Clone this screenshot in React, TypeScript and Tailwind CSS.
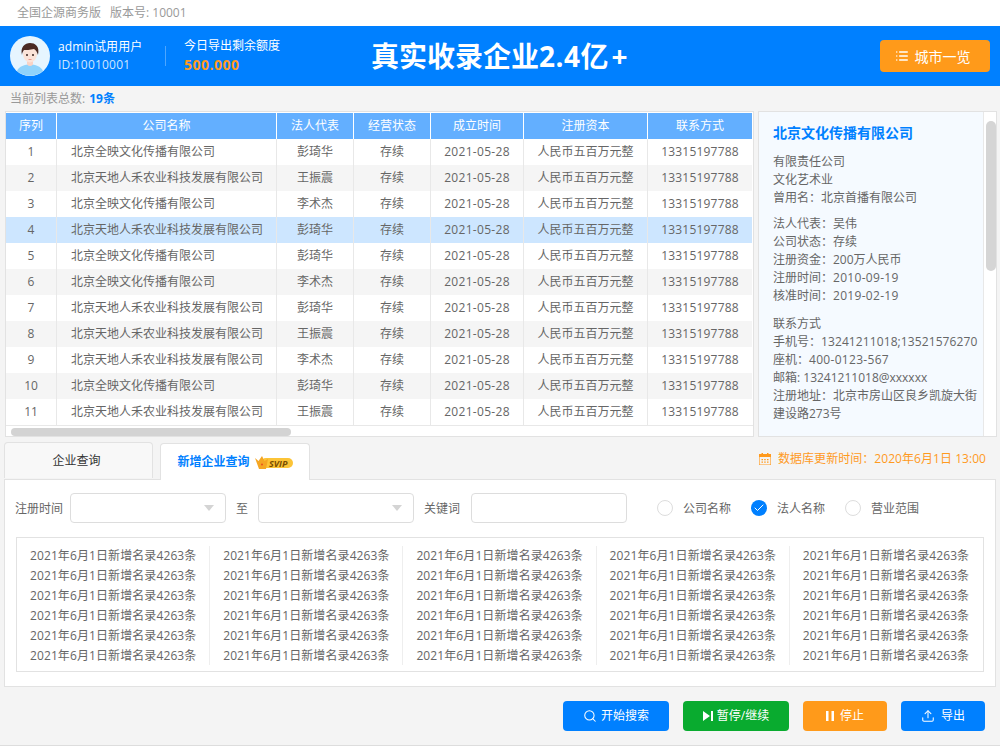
import { Check, List, Search, Upload } from 'lucide-react';

const companyA = '北京全映文化传播有限公司';
const companyB = '北京天地人禾农业科技发展有限公司';

const rows = [
  { id: 1, name: companyA, person: '彭琦华' },
  { id: 2, name: companyB, person: '王振震' },
  { id: 3, name: companyA, person: '李术杰' },
  { id: 4, name: companyB, person: '彭琦华' },
  { id: 5, name: companyA, person: '彭琦华' },
  { id: 6, name: companyA, person: '李术杰' },
  { id: 7, name: companyB, person: '彭琦华' },
  { id: 8, name: companyB, person: '王振震' },
  { id: 9, name: companyB, person: '李术杰' },
  { id: 10, name: companyA, person: '彭琦华' },
  { id: 11, name: companyB, person: '王振震' },
];

const gridCols = 'grid grid-cols-[51px_220px_77px_77px_93px_124px_105px]';

function Avatar() {
  return (
    <svg viewBox="0 0 40 40" className="w-10 h-10 shrink-0">
      <circle cx="20" cy="20" r="20" fill="#e6f5ff" />
      <path d="M7 35c2-5 8-6 13-7 5 1 11 2 13 7a20 20 0 0 1-26 0z" fill="#8fd3fb" />
      <path d="M17 24h6v4.500c-2 2-4 2-6 0z" fill="#f8d3c5" />
      <ellipse cx="20" cy="18" rx="7" ry="8.500" fill="#fbe3d8" />
      <path d="M12 19c-2-8 3-12 8-12s10 3 8 12c-1-3-2-5-4-6-4 1-8 1-10 1-1 1-2 3-2 5z" fill="#4a2a24" />
      <circle cx="17" cy="19" r="1" fill="#3a2420" />
      <circle cx="23" cy="19" r="1" fill="#3a2420" />
      <path d="M18.500 23.500h3" stroke="#e58a80" strokeWidth="0.800" />
    </svg>
  );
}

function SvipBadge() {
  return (
    <div className="relative w-[38px] h-[14px] ml-[5px]">
      <div className="absolute left-[6px] top-[3px] right-0 h-[10px] rounded-full bg-[#fcc437] flex items-center justify-end pr-[5px]">
        <span className="text-[9px] leading-none italic font-bold text-[#7a4d00]">SVIP</span>
      </div>
      <svg viewBox="0 0 14 13" className="absolute left-0 top-px w-[14px] h-[13px]">
        <path d="M0 2l3.500 3L7 0l2.500 5L13 3l-2 10H4z" fill="#f5a623" />
        <circle cx="7" cy="8.500" r="1" fill="#e8501f" />
      </svg>
    </div>
  );
}

function Select({ width }: { width: string }) {
  return (
    <div className={`${width} h-[30px] bg-white border border-[#dddddd] rounded flex items-center justify-end pr-[11px]`}>
      <svg viewBox="0 0 10 6" className="w-[10px] h-[6px]">
        <path d="M0 0h10L5 6z" fill="#d4d4d4" />
      </svg>
    </div>
  );
}

function Radio({ label, checked, width }: { label: string; checked?: boolean; width: string }) {
  return (
    <div className={`flex items-center ${width}`}>
      {checked ? (
        <div className="w-4 h-4 rounded-full bg-[#0080ff] flex items-center justify-center">
          <Check className="w-3 h-3 text-white" strokeWidth={2} />
        </div>
      ) : (
        <div className="w-4 h-4 rounded-full bg-white border border-[#dddddd]" />
      )}
      <span className="ml-[10px] pt-px">{label}</span>
    </div>
  );
}

export default function App() {
  return (
    <div className="w-[1000px] h-[746px] overflow-hidden bg-[#f4f4f4] text-[12px] text-[#666666] font-['Open_Sans','Noto_Sans_CJK_SC',sans-serif] border-b border-[#dddddd]">
      <div className="h-[26px] bg-white pl-[17px] flex items-center text-[#999999] gap-[9px]">
        <span>全国企源商务版</span>
        <span>版本号: 10001</span>
      </div>

      {/* Header */}
      <div className="h-[60px] bg-[#0080ff] flex items-center pl-[10px] pr-[10px] text-white">
        <Avatar />
        <div className="ml-[8px] w-[107px]">
          <div className="leading-[18px] tracking-[0.1px]">admin试用用户</div>
          <div className="leading-[18px] text-[#cfe6ff] tracking-[0.2px]">ID:10010001</div>
        </div>
        <div className="w-px h-[20px] bg-[#4da6ff]" />
        <div className="ml-[18px] w-[187px]">
          <div className="leading-[18px]">今日导出剩余额度</div>
          <div className="leading-[20px] text-[14px] font-bold text-[#ff9a1e] tracking-[0.5px]">500.000</div>
        </div>
        <div className="text-[28px] font-bold leading-none whitespace-nowrap">
          真实收录企业<span className="tracking-[0.5px]">2.4</span>亿<span className="ml-[3px]">+</span>
        </div>
        <button className="ml-auto w-[110px] h-[32px] bg-[#ff9a1a] rounded flex items-center justify-center gap-[6px] pr-[5px] text-[14px]">
          <List className="w-[14px] h-[14px]" strokeWidth={2.5} />
          城市一览
        </button>
      </div>

      <div className="h-[25px] pl-[10px] flex items-center text-[#999999]">
        当前列表总数:<span className="ml-1 font-bold text-[#0080ff]">19条</span>
      </div>

      {/* Table + detail */}
      <div className="flex pl-[5px] pr-[3px] h-[326px]">
        <div className="w-[749px] bg-white border border-[#e2e2e2] pt-px">
          <div className={`${gridCols} h-[26px] bg-[#63afff] text-white text-center leading-[26px]`}>
            {['序列', '公司名称', '法人代表', '经营状态', '成立时间', '注册资本', '联系方式'].map((title) => (
              <div key={title} className="border-r border-white">{title}</div>
            ))}
          </div>
          {rows.map((row) => (
            <div
              key={row.id}
              className={`${gridCols} h-[26px] leading-[26px] text-center ${
                row.id === 4 ? 'bg-[#cde6ff]' : row.id % 2 === 0 ? 'bg-[#f5f5f5]' : 'bg-white'
              }`}
            >
              <div className="border-r border-[#e8e8e8]">{row.id}</div>
              <div className="border-r border-[#e8e8e8] text-left pl-[14px]">{row.name}</div>
              <div className="border-r border-[#e8e8e8]">{row.person}</div>
              <div className="border-r border-[#e8e8e8]">存续</div>
              <div className="border-r border-[#e8e8e8] tracking-[0.3px]">2021-05-28</div>
              <div className="border-r border-[#e8e8e8]">人民币五百万元整</div>
              <div className="border-r border-white tracking-[0.2px]">13315197788</div>
            </div>
          ))}
          <div className="h-[11px] border-t border-[#e8e8e8] pt-[2px] pl-[5px]">
            <div className="w-[280px] h-[8px] rounded-full bg-[#d3d3d3]" />
          </div>
        </div>

        <div className="ml-[4px] w-[239px] flex bg-[#f5faff] border border-[#e2e2e2]">
          <div className="w-[225px] pl-[14px] pt-[11px] leading-[18px] whitespace-nowrap">
            <div className="text-[14px] font-bold text-[#0080ff] leading-[20px] mb-[10px]">北京文化传播有限公司</div>
            <div>有限责任公司</div>
            <div>文化艺术业</div>
            <div>曾用名：北京首播有限公司</div>
            <div className="mt-[8px]">法人代表：吴伟</div>
            <div>公司状态：存续</div>
            <div>注册资金：200万人民币</div>
            <div>注册时间：<span className="tracking-[0.3px]">2010-09-19</span></div>
            <div>核准时间：<span className="tracking-[0.3px]">2019-02-19</span></div>
            <div className="mt-[10px]">联系方式</div>
            <div>手机号：<span className="tracking-[0.1px]">13241211018;13521576270</span></div>
            <div>座机：<span className="tracking-[0.3px]">400-0123-567</span></div>
            <div>邮箱: 13241211018@xxxxxx</div>
            <div>注册地址：北京市房山区良乡凯旋大街</div>
            <div>建设路273号</div>
          </div>
          <div className="flex-1 bg-white border-l border-[#e8e8e8] pl-[2px] pt-[9px]">
            <div className="w-[10px] h-[150px] rounded-full bg-[#d5d5d5]" />
          </div>
        </div>
      </div>

      {/* Tabs */}
      <div className="flex items-end h-[42px] pl-[4px] pr-[4px] relative">
        <div className="w-[149px] h-[36px] mb-px bg-[#f8f8f8] border border-b-0 border-[#e2e2e2] rounded-t flex items-center justify-center text-[#333333] pr-[4px]">企业查询</div>
        <div className="ml-[7px] w-[150px] h-[37px] bg-white border border-b-0 border-[#e2e2e2] rounded-t flex items-center justify-center font-bold text-[#0080ff] relative -mb-px z-10">
          新增企业查询
          <SvipBadge />
        </div>
        <div className="ml-auto mr-[10px] mb-[11px] flex items-center text-[#ff9a1e]">
          <svg viewBox="0 0 12 12" className="w-3 h-3 mr-[7px]">
            <path d="M0 1.500h12V12H0z" fill="none" stroke="currentColor" strokeWidth="1.200" />
            <path d="M0 1h12v3H0zM2.500 0h1.500v2H2.500zM8 0h1.500v2H8z" fill="currentColor" />
            <path d="M2.500 6h1.500v1.200H2.500zM5.200 6h1.500v1.200H5.200zM8 6h1.500v1.200H8zM2.500 8.500h1.500v1.200H2.500zM5.200 8.500h1.500v1.200H5.200zM8 8.500h1.500v1.200H8z" fill="currentColor" />
          </svg>
          <span className="tracking-[0.05px]">数据库更新时间：2020年6月1日 13:00</span>
        </div>
      </div>

      {/* Search panel */}
      <div className="ml-[4px] w-[992px] h-[208px] bg-white border border-[#e2e2e2] px-[10px] pt-[13px]">
        <div className="flex items-center h-[30px]">
          <span className="w-[55px] pt-px">注册时间</span>
          <Select width="w-[156px]" />
          <span className="w-[32px] text-center pt-px">至</span>
          <Select width="w-[156px]" />
          <span className="ml-[10px] w-[47px] pt-px">关键词</span>
          <div className="w-[156px] h-[30px] bg-white border border-[#dddddd] rounded" />
          <div className="ml-[30px] flex items-center">
            <Radio label="公司名称" width="w-[94px]" />
            <Radio label="法人名称" checked width="w-[94px]" />
            <Radio label="营业范围" width="w-[90px]" />
          </div>
        </div>
        <div className="mt-[14px] ml-px w-[968px] h-[135px] border border-[#e2e2e2] pt-[8px] grid grid-cols-5">
          {[0, 1, 2, 3, 4].map((col) => (
            <div key={col} className="pl-[13px] h-[119px] border-r border-[#eeeeee] last:border-r-0">
              {[0, 1, 2, 3, 4, 5].map((line) => (
                <div key={line} className="leading-[20px] whitespace-nowrap tracking-[0.1px]">2021年6月1日新增名录4263条</div>
              ))}
            </div>
          ))}
        </div>
      </div>

      {/* Actions */}
      <div className="flex justify-end pr-[15px] pt-[14px] gap-[14px] text-white">
        <button className="w-[106px] h-[30px] rounded bg-[#0080ff] flex items-center justify-center gap-[4px]">
          <Search className="w-[14px] h-[14px]" strokeWidth={1.8} />
          开始搜索
        </button>
        <button className="w-[106px] h-[30px] rounded bg-[#09ab2f] flex items-center justify-center gap-[4px]">
          <svg viewBox="0 0 10 10" className="w-[10px] h-[10px]">
            <path d="M0 0l7 5-7 5zM8 0h2v10H8z" fill="currentColor" />
          </svg>
          暂停/继续
        </button>
        <button className="w-[84px] h-[30px] rounded bg-[#ff9a1a] flex items-center justify-center gap-[6px]">
          <svg viewBox="0 0 8 10" className="w-2 h-[10px]">
            <path d="M0 0h2.500v10H0zM5.500 0H8v10H5.500z" fill="currentColor" />
          </svg>
          停止
        </button>
        <button className="w-[84px] h-[30px] rounded bg-[#0080ff] flex items-center justify-center gap-[6px]">
          <Upload className="w-[14px] h-[14px]" strokeWidth={1.8} />
          导出
        </button>
      </div>
    </div>
  );
}
